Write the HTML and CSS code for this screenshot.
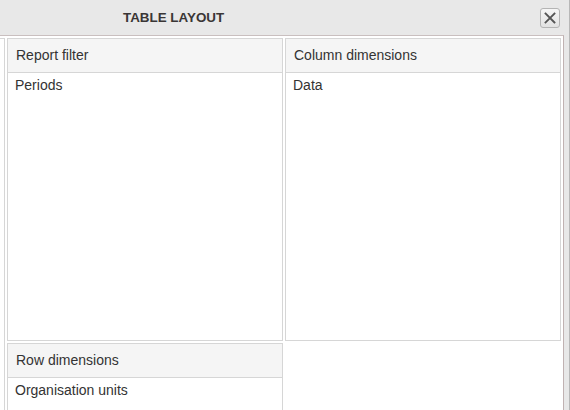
FILE: index.html
```html
<!DOCTYPE html>
<html>
<head>
<meta charset="utf-8">
<title>Table layout</title>
<link rel="stylesheet" href="styles.css">
</head>
<body>
<div class="window">
  <div class="header">
    <span class="title">TABLE LAYOUT</span>
    <button class="close" aria-label="Close">
      <svg width="12" height="12" viewBox="0 0 12 12"><path d="M1.5 1.5 L10.5 10.5 M10.5 1.5 L1.5 10.5" stroke="#555555" stroke-width="1.8" stroke-linecap="square" fill="none"/></svg>
    </button>
  </div>
  <div class="body">
    <div class="grid">
      <div class="panel partial"></div>
      <div class="panel">
        <div class="panel-header">Report filter</div>
        <div class="item">Periods</div>
      </div>
      <div class="panel">
        <div class="panel-header">Column dimensions</div>
        <div class="item">Data</div>
      </div>
      <div class="panel">
        <div class="panel-header">Row dimensions</div>
        <div class="item">Organisation units</div>
      </div>
    </div>
  </div>
</div>
</body>
</html>
```
FILE: styles.css
```css
html, body {
  margin: 0;
  padding: 0;
}
body {
  width: 570px;
  height: 410px;
  overflow: hidden;
  background: #ffffff;
  font-family: "Liberation Sans", Arial, sans-serif;
  color: #333333;
}
.window {
  box-sizing: border-box;
  width: 570px;
  height: 410px;
  background: #e8e8e8;
  border-right: 1px solid #b8b8b8;
  display: flex;
  flex-direction: column;
}
.header {
  height: 35px;
  display: flex;
  align-items: center;
  justify-content: space-between;
  flex-shrink: 0;
}
.title {
  margin-left: 123px;
  font-size: 13.4px;
  font-weight: bold;
  color: #3a3636;
}
.close {
  box-sizing: border-box;
  width: 20px;
  height: 20px;
  margin-right: 9px;
  padding: 0;
  border: 1px solid #b4b4b4;
  border-radius: 3px;
  background: linear-gradient(#f6f6f6, #e2e2e2);
  display: flex;
  align-items: center;
  justify-content: center;
}
.body {
  box-sizing: border-box;
  width: 564px;
  flex: 1;
  background: #ffffff;
  border-top: 1px solid #c9bfbf;
  border-right: 1px solid #c0b2b2;
  padding-top: 2px;
  overflow: hidden;
}
.grid {
  display: grid;
  grid-template-columns: 5px 276px 276px;
  grid-template-rows: 303px 100px;
  column-gap: 2px;
  row-gap: 2px;
}
.panel {
  box-sizing: border-box;
  border: 1px solid #d6d6d6;
  background: #ffffff;
}
.partial {
  grid-row: 1 / span 2;
  border-left: none;
  border-bottom: none;
}
.panel-header {
  height: 33px;
  line-height: 33px;
  padding-left: 8px;
  background: #f5f5f5;
  border-bottom: 1px solid #d6d6d6;
  font-size: 14px;
  color: #333333;
}
.item {
  padding: 4px 7px;
  line-height: 17px;
  font-size: 14px;
  color: #333333;
}
```
